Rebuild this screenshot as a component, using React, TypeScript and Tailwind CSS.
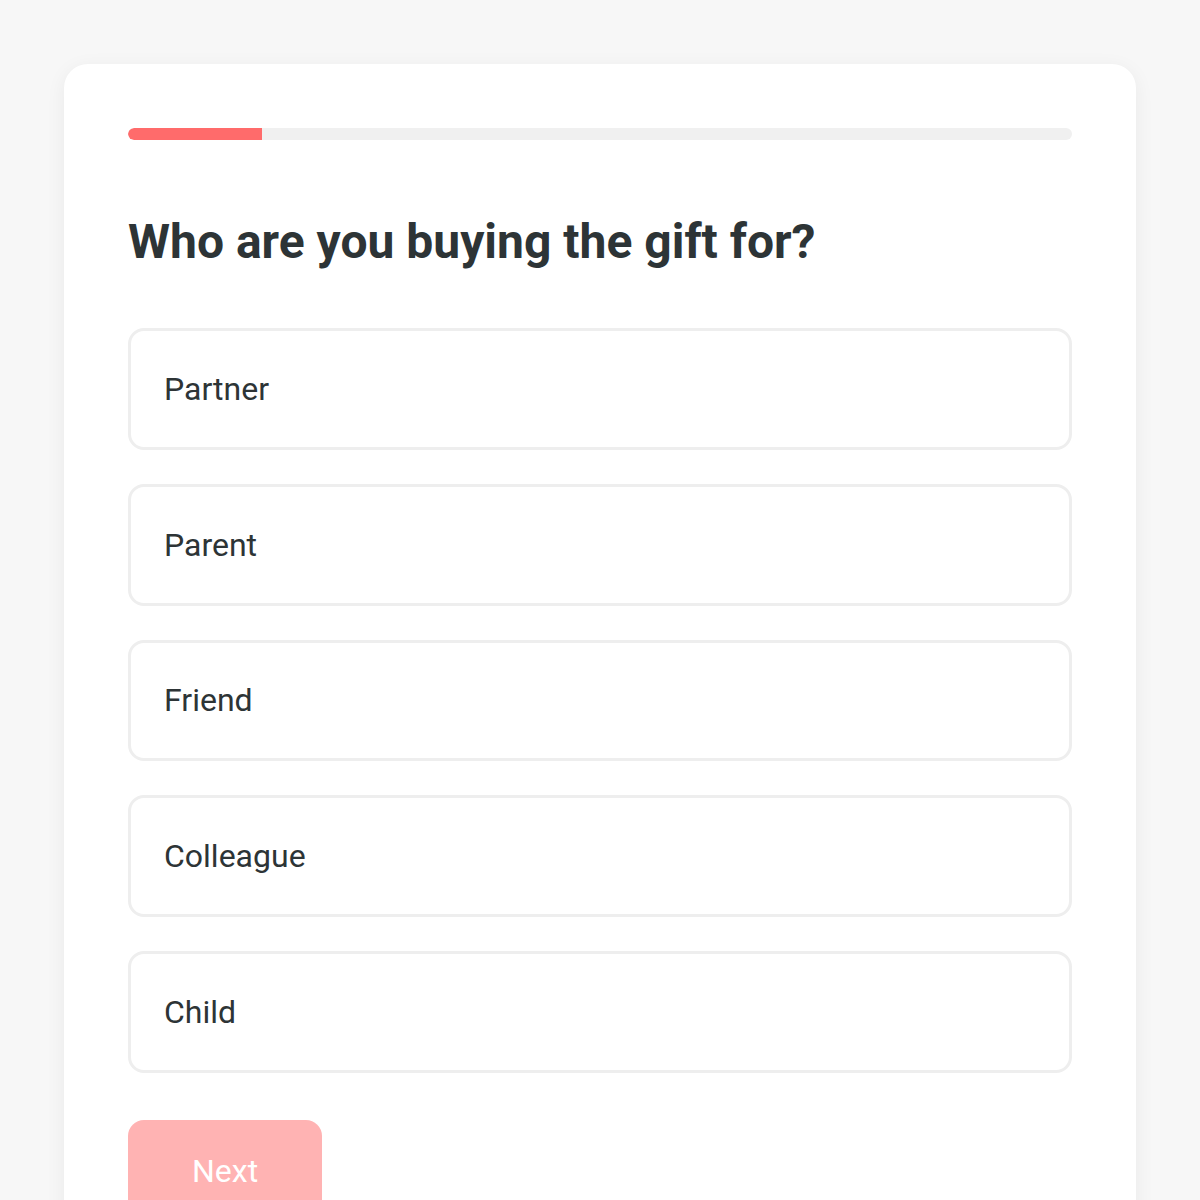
import React from "react";

const options = ["Partner", "Parent", "Friend", "Colleague", "Child"];

export default function App() {
  return (
    <div
      className="min-h-[1200px] w-full bg-[#f7f7f7] px-16 pt-16"
      style={{ fontFamily: "Roboto, 'Liberation Sans', sans-serif" }}
    >
      <div className="min-h-[1200px] rounded-[24px] bg-white p-16 shadow-[0_4px_20px_rgba(0,0,0,0.06)]">
        <div className="h-3 w-full overflow-hidden rounded-full bg-[#f0f0f0]">
          <div className="h-full w-[134px] rounded-l-full bg-[#ff6b6b]" />
        </div>
        <h1 className="mt-[73px] text-[48px] font-bold leading-[58px] text-[#2d3436]">
          Who are you buying the gift for?
        </h1>
        <div className="mt-[57px] flex flex-col gap-[34px]">
          {options.map((o) => (
            <div
              key={o}
              className="flex h-[121.75px] items-center rounded-[16px] border-[3px] border-[#eeeeee] bg-white pl-[33px] text-[32px] text-[#2d3436]"
            >
              {o}
            </div>
          ))}
        </div>
        <button className="mt-[47px] rounded-[16px] bg-[#ffb3b3] px-16 pb-6 pt-[27px] text-[32px] leading-[48px] text-white">
          Next
        </button>
      </div>
    </div>
  );
}
